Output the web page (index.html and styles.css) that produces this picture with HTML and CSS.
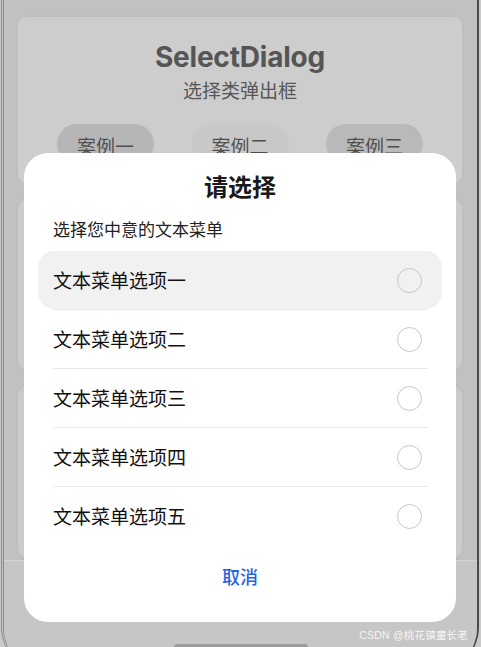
FILE: index.html
```html
<!DOCTYPE html>
<html lang="zh">
<head>
<meta charset="utf-8">
<link rel="stylesheet" href="styles.css">
</head>
<body>
<div class="device">
  <div class="content">
    <div class="card card-top">
      <div class="app-title">SelectDialog</div>
      <div class="app-sub">选择类弹出框</div>
      <div class="pills">
        <div class="pill pill-a">案例一</div>
        <div class="pill pill-b">案例二</div>
        <div class="pill pill-c">案例三</div>
      </div>
    </div>
    <div class="card card-mid"></div>
    <div class="card card-mid"></div>
  </div>
  <div class="bottom">
    <div class="home-bar"></div>
  </div>
</div>

<div class="dialog">
  <div class="dlg-title">请选择</div>
  <div class="dlg-sub">选择您中意的文本菜单</div>
  <div class="list">
    <div class="row row-active"><span class="row-text">文本菜单选项一</span><span class="radio"></span></div>
    <div class="divider"></div>
    <div class="row"><span class="row-text">文本菜单选项二</span><span class="radio"></span></div>
    <div class="divider"></div>
    <div class="row"><span class="row-text">文本菜单选项三</span><span class="radio"></span></div>
    <div class="divider"></div>
    <div class="row"><span class="row-text">文本菜单选项四</span><span class="radio"></span></div>
    <div class="divider"></div>
    <div class="row"><span class="row-text">文本菜单选项五</span><span class="radio"></span></div>
  </div>
  <div class="cancel">取消</div>
</div>

<div class="watermark">CSDN @桃花镇童长老</div>
</body>
</html>
```
FILE: styles.css
```css
* { box-sizing: border-box; }
html, body {
  margin: 0;
  width: 481px;
  height: 647px;
  overflow: hidden;
}
body {
  background: #c9c9c9;
  padding-left: 1px;
  font-family: "Noto Sans CJK SC", "Noto Sans", sans-serif;
  position: relative;
}
.device {
  width: 478px;
  height: 668px;
  background: #c1c1c1;
  border-left: 3px double #8e8e8e;
  border-right: 2px solid #4a4a4a;
  border-bottom-left-radius: 40px;
  border-bottom-right-radius: 40px;
  overflow: hidden;
  display: flex;
  flex-direction: column;
}
.content {
  padding: 17px 15px 0 14px;
  height: 560px;
  display: flex;
  flex-direction: column;
  gap: 17px;
}
.card {
  background: #cdcdcd;
  border-radius: 8px;
  box-shadow: 0 0 3px rgba(0,0,0,0.06);
}
.card-top {
  height: 166px;
  display: flex;
  flex-direction: column;
  align-items: center;
  padding-top: 22px;
}
.card-mid {
  height: 170px;
  background: #cbcbcb;
}
.app-title {
  font-family: Inter, "Noto Sans", sans-serif;
  font-weight: 700;
  font-size: 28px;
  line-height: 36px;
  color: #555555;
  letter-spacing: -0.2px;
}
.app-sub {
  font-size: 19px;
  line-height: 26px;
  color: #575757;
  margin-top: 2px;
}
.pills {
  display: flex;
  gap: 36px;
  margin-top: 21px;
  width: 100%;
  padding: 0 39px 0 39px;
  justify-content: space-between;
}
.pill {
  width: 97px;
  height: 40px;
  border-radius: 20px;
  font-size: 19px;
  color: #505050;
  display: flex;
  align-items: center;
  justify-content: center;
  padding-top: 2px;
}
.pill-a { background: #b6b6b6; }
.pill-b { background: #c8c8c8; }
.pill-c { background: #b9b9b9; }
.bottom {
  flex: 1;
  background: #c6c6c6;
  border-top: 1px solid #d3d3d3;
  display: flex;
  flex-direction: column;
  align-items: center;
  padding-top: 83px;
}
.home-bar {
  width: 134px;
  height: 6px;
  border-radius: 3px;
  background: #9c9c9c;
}

.dialog {
  position: absolute;
  left: 24px;
  top: 153px;
  width: 432px;
  height: 469px;
  background: #ffffff;
  border-radius: 24px;
  display: flex;
  flex-direction: column;
}
.dlg-title {
  text-align: center;
  font-size: 24px;
  font-weight: 700;
  line-height: 30px;
  color: #1a1a1a;
  margin-top: 18px;
}
.dlg-sub {
  font-size: 17px;
  line-height: 22px;
  color: #222;
  margin: 17px 0 0 29px;
}
.list {
  margin: 11px 14px 0 14px;
  display: flex;
  flex-direction: column;
}
.row {
  height: 58px;
  display: flex;
  align-items: center;
  justify-content: space-between;
  padding: 0 20px 0 15px;
  border-radius: 16px;
}
.row-active { background: #f1f1f1; }
.row-text {
  font-size: 19px;
  color: #111111;
  line-height: 26px;
}
.radio {
  width: 25px;
  height: 25px;
  border-radius: 50%;
  border: 1.5px solid #c6c6c6;
}
.divider {
  height: 1px;
  background: #e8e8e8;
  margin: 0 14px 0 15px;
}
.cancel {
  margin-top: 18px;
  text-align: center;
  font-size: 18px;
  font-weight: 500;
  line-height: 26px;
  color: #1f65e3;
}
.watermark {
  position: absolute;
  right: 13px;
  top: 627px;
  font-family: "Liberation Sans", "Noto Sans CJK SC", sans-serif;
  font-size: 10.5px;
  color: rgba(255,255,255,0.85);
  letter-spacing: 0.2px;
}
```
